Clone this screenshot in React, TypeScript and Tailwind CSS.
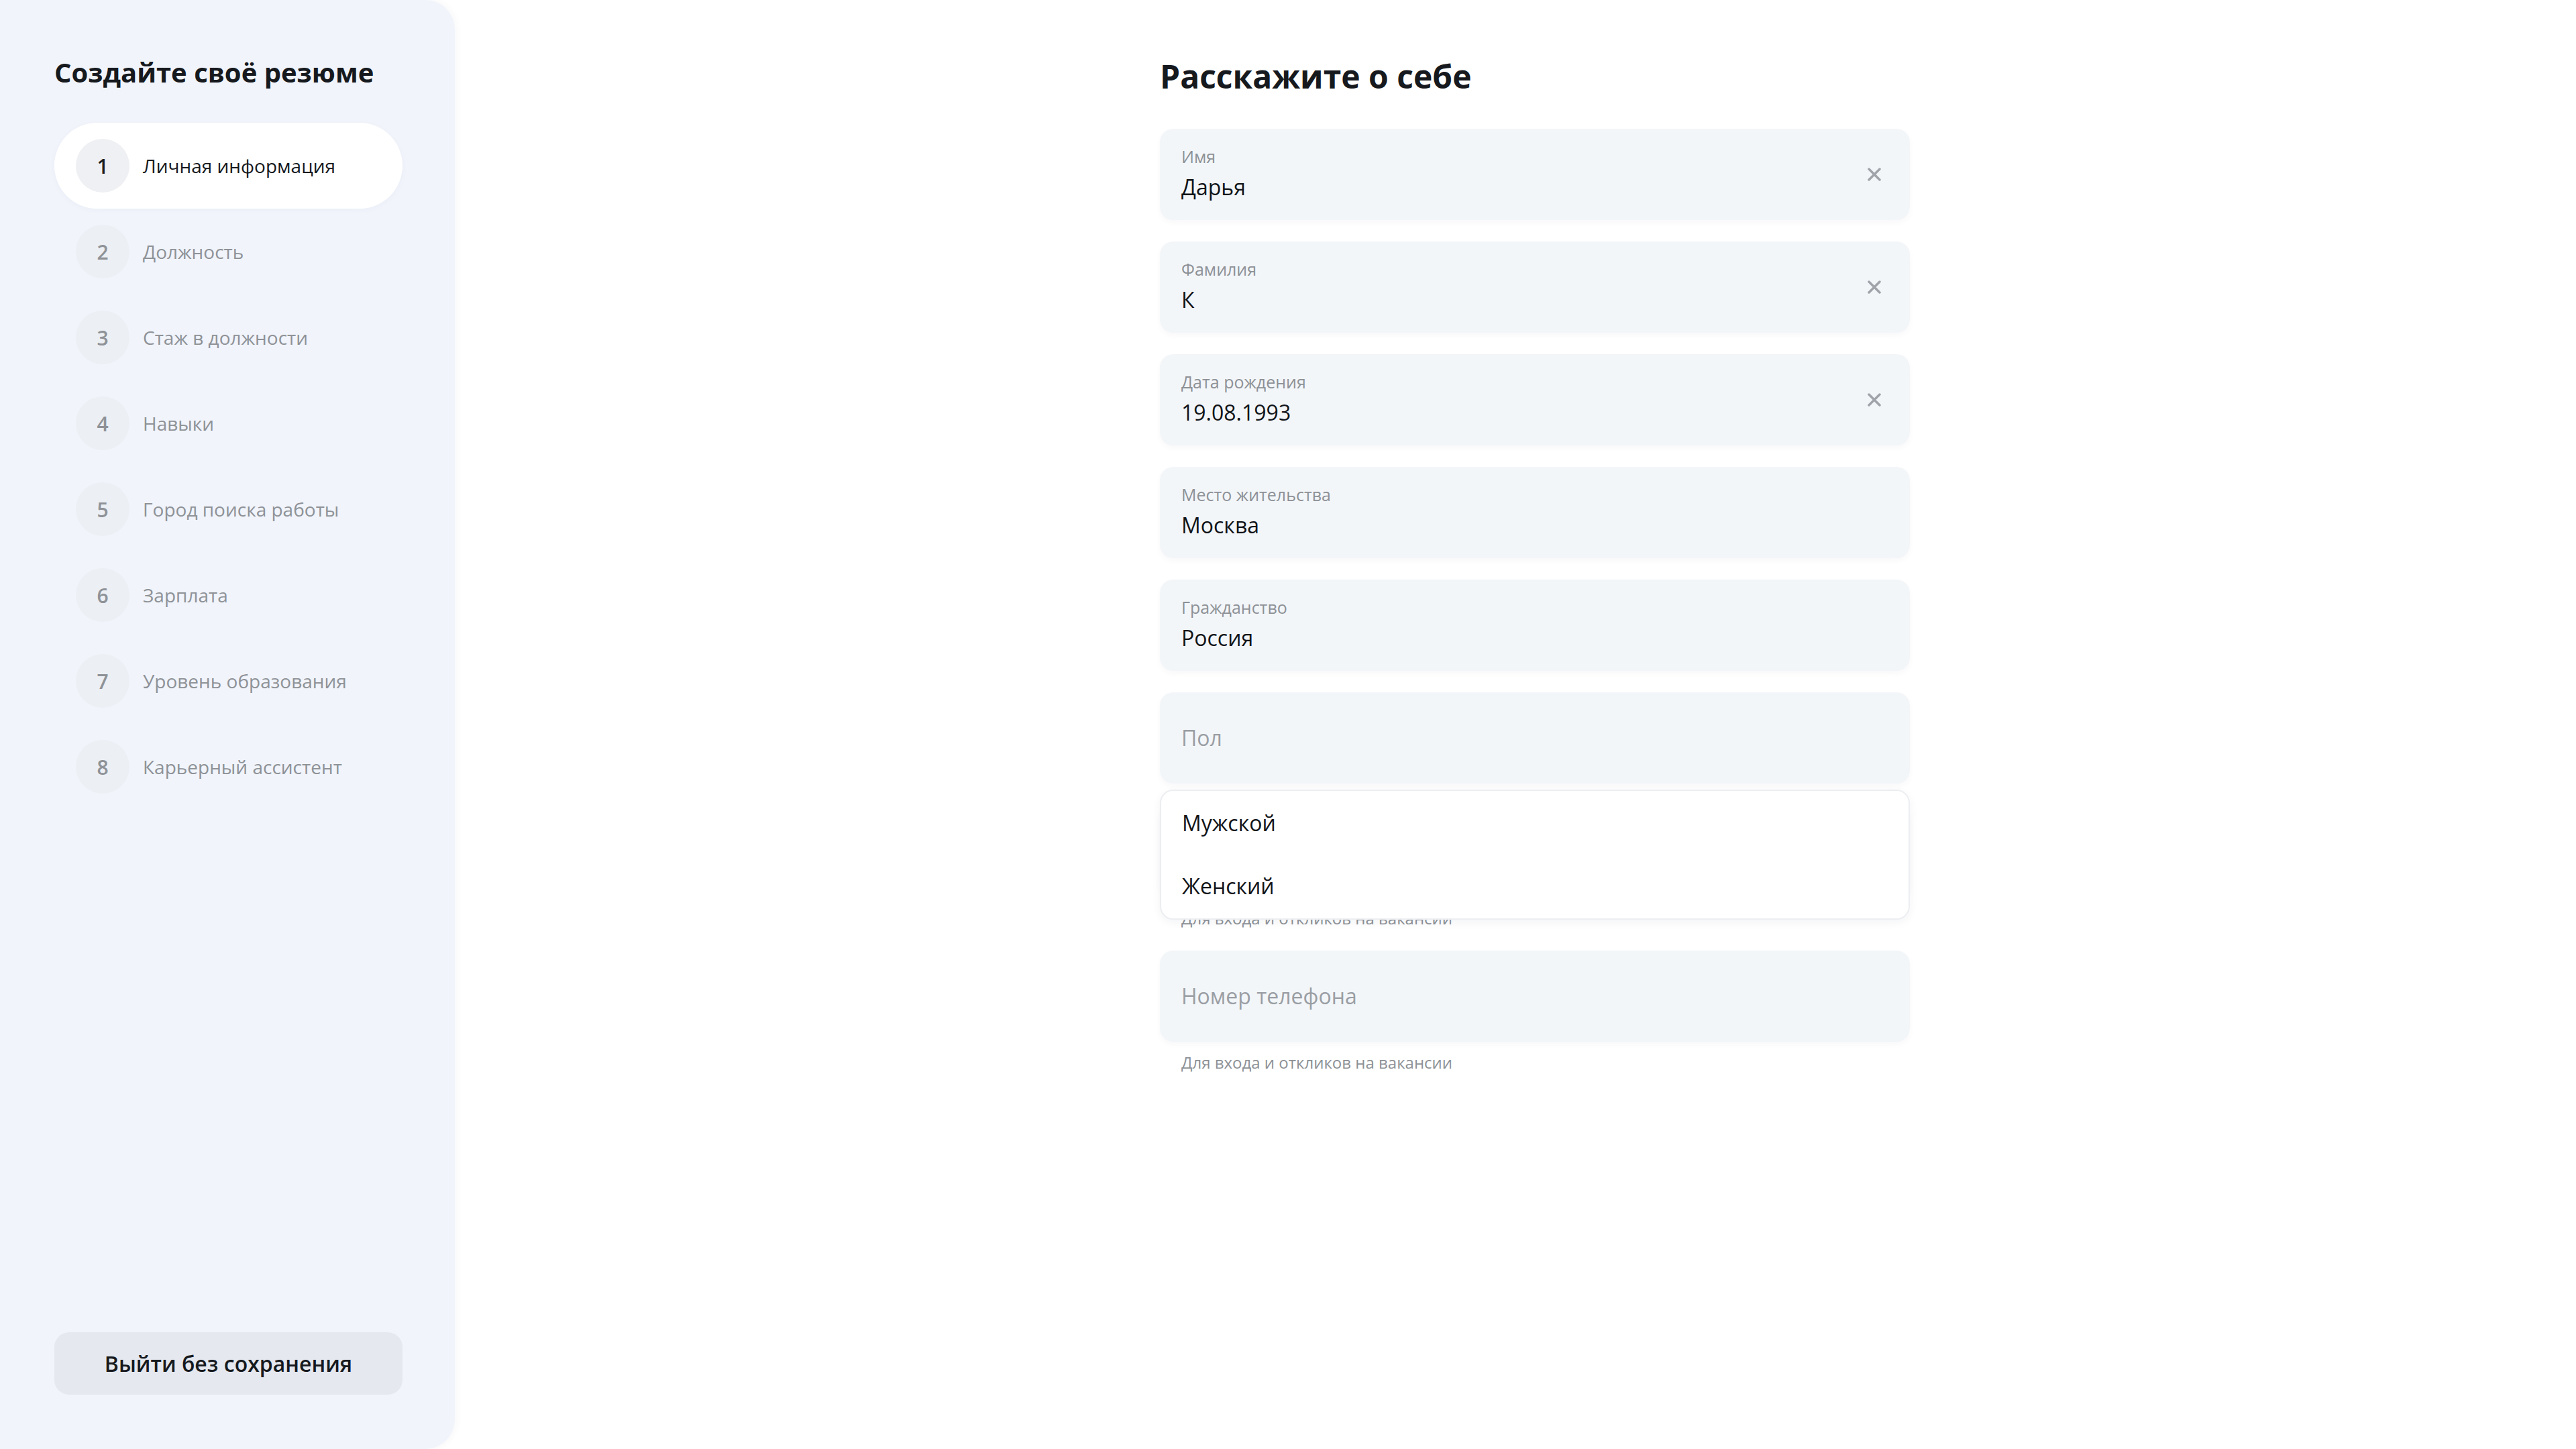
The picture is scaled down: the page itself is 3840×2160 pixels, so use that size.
import React from "react";

const steps = [
  "Личная информация",
  "Должность",
  "Стаж в должности",
  "Навыки",
  "Город поиска работы",
  "Зарплата",
  "Уровень образования",
  "Карьерный ассистент",
];

function ClearIcon() {
  return (
    <svg width="22" height="22" viewBox="0 0 22 22" fill="none">
      <path d="M3 3L19 19M19 3L3 19" stroke="#a0a4aa" strokeWidth="3.5" strokeLinecap="round" />
    </svg>
  );
}

function Field({ label, value, clear }: { label: string; value: string; clear?: boolean }) {
  return (
    <div className="flex h-[136px] items-center rounded-[20px] bg-[#f3f6f9] pl-[32px] pr-[42px] shadow-[0_4px_10px_rgba(20,40,80,0.03)]">
      <div className="flex flex-1 flex-col gap-[8px] pb-[2px]">
        <div className="text-[25px] font-medium leading-[32px] text-[#8d9196]">{label}</div>
        <div className="text-[32px] leading-[44px] text-[#111418]">{value}</div>
      </div>
      {clear && <ClearIcon />}
    </div>
  );
}

function PlaceholderField({ placeholder }: { placeholder: string }) {
  return (
    <div className="flex h-[136px] items-center rounded-[20px] bg-[#f3f6f9] px-[32px] shadow-[0_4px_10px_rgba(20,40,80,0.03)]">
      <div className="text-[32px] leading-[44px] text-[#9a9ea4]">{placeholder}</div>
    </div>
  );
}

export default function App() {
  return (
    <div
      className="flex h-[2160px] w-[3840px] bg-white"
      style={{ fontFamily: '"Open Sans", "Noto Sans", sans-serif' }}
    >
      <aside className="flex h-full w-[678px] shrink-0 flex-col rounded-r-[44px] bg-[#f1f4fb] pl-[81px] pr-[78px] pt-[84px] pb-[81px] shadow-[2px_0_12px_rgba(30,50,90,0.04)]">
        <h1 className="text-[40px] font-bold leading-[48px] text-[#16191d]">Создайте своё резюме</h1>
        <div className="mt-[51px] flex flex-col">
          {steps.map((s, i) => {
            const active = i === 0;
            return (
              <div
                key={s}
                className={
                  active
                    ? "flex h-[128px] items-center gap-[20px] rounded-full bg-white pl-[32px] shadow-[0_2px_10px_rgba(30,50,90,0.03)]"
                    : "flex h-[128px] items-center gap-[20px] rounded-full pl-[32px]"
                }
              >
                <div
                  className={
                    active
                      ? "flex h-[80px] w-[80px] items-center justify-center rounded-full bg-[#eff0f3] text-[30px] font-semibold text-[#1b1e22]"
                      : "flex h-[80px] w-[80px] items-center justify-center rounded-full bg-[#eceff4] text-[30px] font-semibold text-[#8e9297]"
                  }
                >
                  {i + 1}
                </div>
                <div className={active ? "text-[28px] text-[#16191d]" : "text-[28px] text-[#8e9297]"}>{s}</div>
              </div>
            );
          })}
        </div>
        <div className="flex-1" />
        <button className="h-[93px] w-full rounded-[22px] bg-[#e5e8ef] text-[32px] font-semibold text-[#16191d]">
          Выйти без сохранения
        </button>
      </aside>

      <main className="flex-1 pl-[1051px] pt-[85px]">
        <div className="w-[1118px]">
          <h2 className="text-[48px] font-bold leading-[58px] text-[#16191d]">Расскажите о себе</h2>
          <div className="mt-[49px] flex flex-col gap-[32px]">
            <Field label="Имя" value="Дарья" clear />
            <Field label="Фамилия" value="К" clear />
            <Field label="Дата рождения" value="19.08.1993" clear />
            <Field label="Место жительства" value="Москва" />
            <Field label="Гражданство" value="Россия" />
            <div className="relative z-10">
              <PlaceholderField placeholder="Пол" />
              <div className="absolute left-0 right-0 top-[calc(100%+9px)] rounded-[20px] border-2 border-[#eceef1] bg-white py-[1px] shadow-[0_4px_14px_rgba(20,40,80,0.05)]">
                <div className="flex h-[94px] items-center px-[31px] text-[32px] text-[#111418]">Мужской</div>
                <div className="flex h-[94px] items-center px-[31px] text-[32px] text-[#111418]">Женский</div>
              </div>
            </div>
            <div>
              <PlaceholderField placeholder="Электронная почта" />
              <div className="mt-[17px] pl-[32px] text-[24px] leading-[32px] text-[#8d9196]">
                Для входа и откликов на вакансии
              </div>
            </div>
            <div>
              <PlaceholderField placeholder="Номер телефона" />
              <div className="mt-[15px] pl-[32px] text-[24px] leading-[32px] text-[#8d9196]">
                Для входа и откликов на вакансии
              </div>
            </div>
          </div>
        </div>
      </main>
    </div>
  );
}
